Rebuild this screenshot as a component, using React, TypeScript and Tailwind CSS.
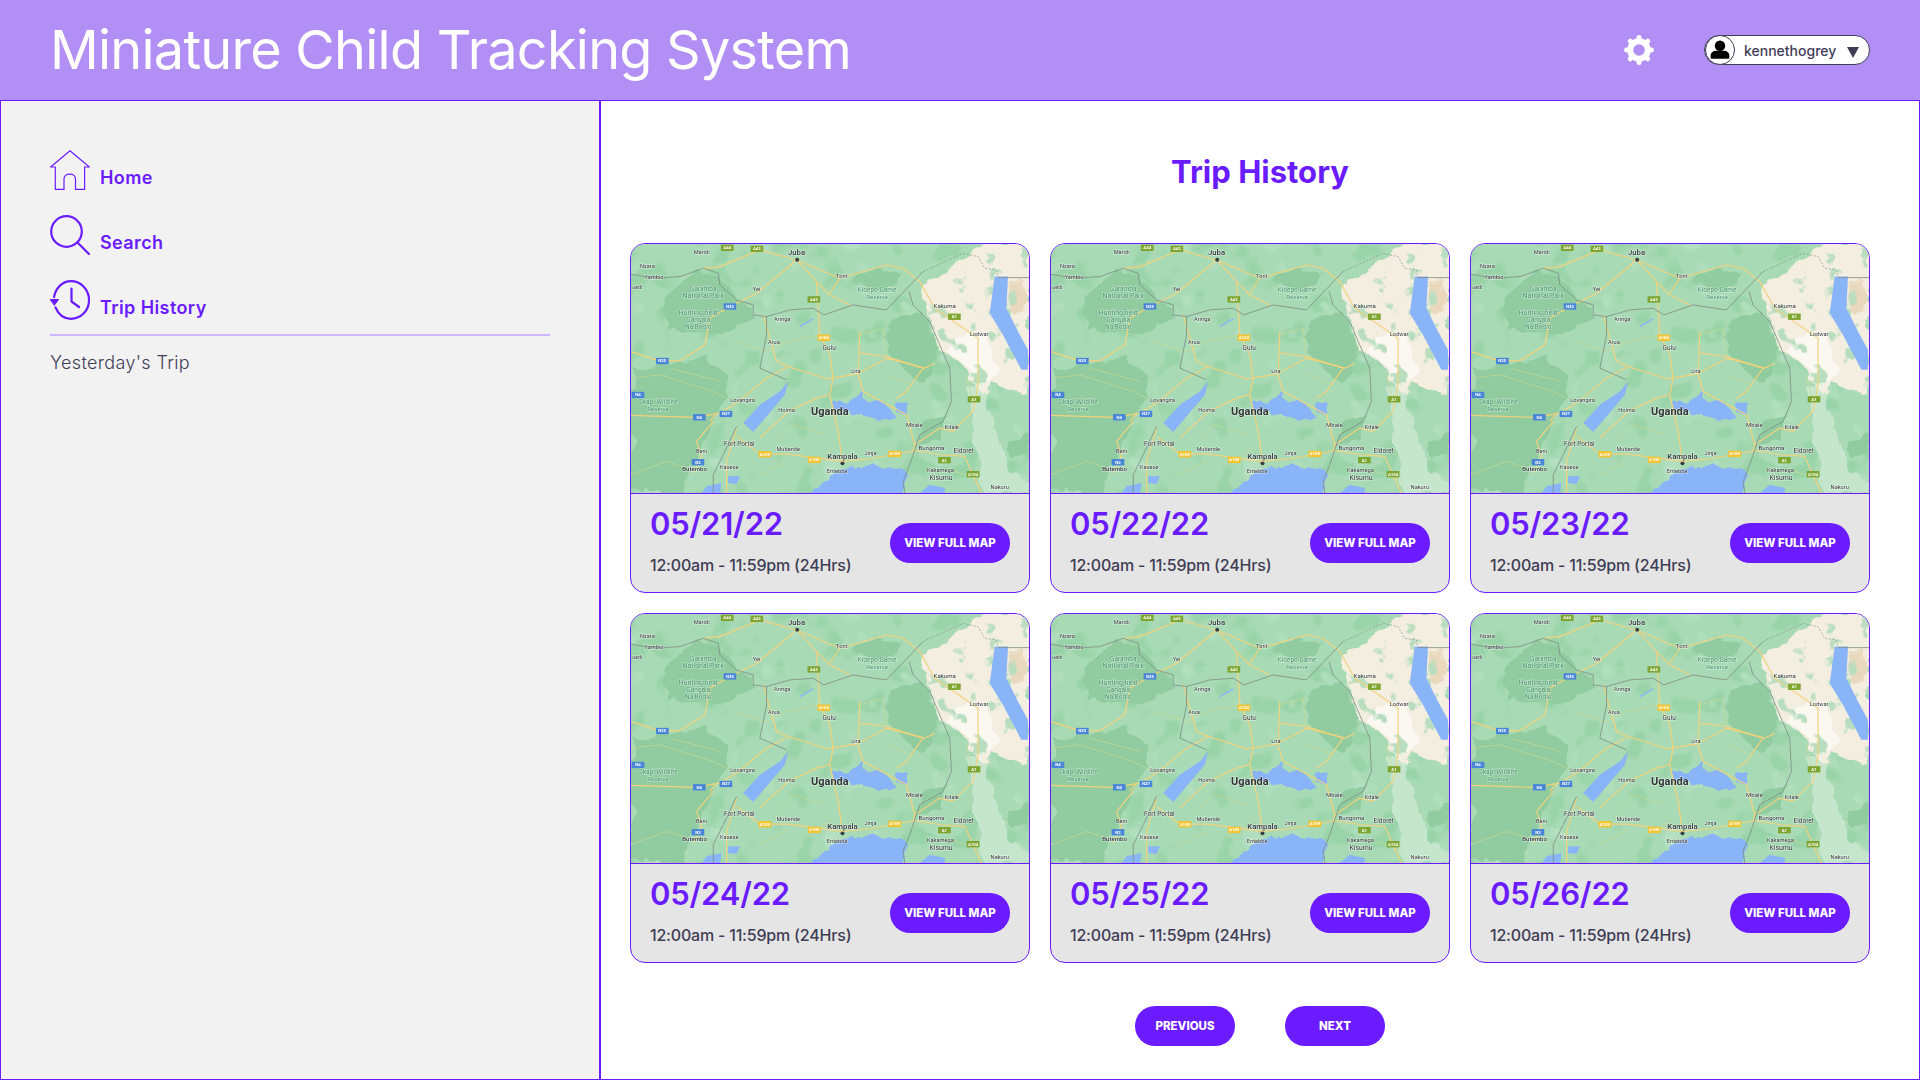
const trips = ["05/21/22", "05/22/22", "05/23/22", "05/24/22", "05/25/22", "05/26/22"];

const roads = [
  "M33 542 L130 545 L225 548 L300 535 L350 505 L440 430 L505 395 L620 432 L710 418 L800 370 L915 400 L945 385",
  "M250 100 L300 95 L420 45 L530 75 L660 130 L800 90 L850 100 L900 140 L945 220 L1075 310 L1075 450 L1060 530 L1000 590",
  "M530 75 L590 140 L600 300 L630 360 L640 430 L630 480 L655 590 L668 685",
  "M430 240 L470 380 L505 395 M720 290 L715 420 L730 470 L860 540 L885 630 L880 650",
  "M33 350 L120 378 L180 378 L255 330 L270 250 L330 215 L410 175 L530 75",
  "M350 605 L420 658 L505 658 L665 680 L750 672 L885 648 L965 660 L1035 665 L1060 720 L1085 775",
  "M270 560 L290 535 M350 580 L320 680 L320 775 M220 715 L245 665 L230 620 L280 560",
  "M505 530 L420 610 M505 530 L590 490 L630 480 M720 355 L800 365 L910 400 L860 470 L830 490",
  "M590 140 L630 180 L690 210 M630 175 L660 130 M885 630 L960 580 L1000 590",
];

const minorRoads = [
  "M33 430 L120 420 L280 470 L340 500 M150 400 L300 440 M340 320 L440 350 L500 320 L600 300",
  "M470 620 L520 570 L620 600 M560 700 L640 640 M720 300 L790 280 L800 370 M880 450 L800 420",
  "M33 720 L140 680 L200 700 M420 720 L500 680 M1040 420 L1060 500 M980 700 L1090 740",
];

const labels: [number, number, string, number, number?][] = [
  [530, 60, "Juba", 19, 500],
  [245, 58, "Maridi", 14],
  [82, 98, "Nzara", 14],
  [102, 132, "Yambio", 14],
  [52, 162, "uedi", 13],
  [666, 128, "Torit", 14],
  [410, 168, "Yei", 14],
  [487, 258, "Aringa", 14],
  [462, 326, "Arua", 14],
  [628, 346, "Gulu", 16],
  [708, 416, "Lira", 14],
  [975, 220, "Kakuma", 15],
  [1078, 302, "Lodwar", 14],
  [368, 502, "Lovangira", 14],
  [500, 532, "Hoima", 14],
  [630, 540, "Uganda", 27, 700],
  [884, 576, "Mbale", 15],
  [996, 584, "Kitale", 14],
  [358, 634, "Fort Portal", 16],
  [505, 650, "Mubende", 14],
  [668, 672, "Kampala", 19, 500],
  [752, 662, "Jinja", 14],
  [935, 646, "Bungoma", 15],
  [1032, 654, "Eldoret", 16],
  [245, 656, "Beni", 14],
  [224, 708, "Butembo", 15, 500],
  [328, 702, "Kasese", 14],
  [652, 716, "Entebbe", 14],
  [962, 713, "Kakamega", 14],
  [964, 736, "Kisumu", 17],
  [1140, 764, "Nakuru", 14],
];

const parkLabels: [number, number, string, number][] = [
  [250, 168, "Garamba", 16],
  [250, 190, "National Park", 17],
  [235, 241, "Hunting field", 17],
  [235, 261, "Gangala", 16],
  [235, 282, "Na Bodio", 16],
  [772, 172, "Kidepo Game", 16],
  [772, 192, "Reserve", 15],
  [114, 507, "Okapi Wildlife", 16],
  [114, 528, "Reserve", 15],
];

const shields: [number, number, string, string][] = [
  [322, 38, "A44", "#7ea52f"],
  [411, 41, "A43", "#7ea52f"],
  [582, 193, "A43", "#7ea52f"],
  [612, 308, "A104", "#f4c430"],
  [1004, 245, "A1", "#7ea52f"],
  [1063, 493, "A1", "#7ea52f"],
  [974, 676, "A1", "#7ea52f"],
  [1060, 718, "A104", "#7ea52f"],
  [435, 658, "A109", "#f4c430"],
  [583, 675, "A109", "#f4c430"],
  [825, 657, "A109", "#f4c430"],
  [330, 214, "N25", "#4a86d8"],
  [127, 378, "N25", "#4a86d8"],
  [238, 547, "N4", "#4a86d8"],
  [318, 537, "N27", "#4a86d8"],
  [234, 682, "N2", "#4a86d8"],
  [54, 480, "N4", "#4a86d8"],
];

const aridShape =
  "M920 130 L990 95 L1050 60 L1130 30 L1228 30 L1228 480 L1170 470 L1120 445 L1090 500 L1060 440 L1010 385 L965 345 L935 280 L915 200 Z";

function MapImage() {
  return (
    <svg viewBox="33 27 1195 748" preserveAspectRatio="none" className="block h-full w-full blur-[0.6px]">
      <defs>
        <filter id="organic" x="-5%" y="-5%" width="110%" height="110%" colorInterpolationFilters="sRGB">
          <feTurbulence type="fractalNoise" baseFrequency="0.014" numOctaves="3" seed="4" result="n" />
          <feDisplacementMap in="SourceGraphic" in2="n" scale="55" xChannelSelector="R" yChannelSelector="G" />
          <feGaussianBlur stdDeviation="1.5" />
        </filter>
        <filter id="rough" x="-5%" y="-5%" width="110%" height="110%" colorInterpolationFilters="sRGB">
          <feTurbulence type="fractalNoise" baseFrequency="0.035" numOctaves="2" seed="7" result="n" />
          <feDisplacementMap in="SourceGraphic" in2="n" scale="24" xChannelSelector="R" yChannelSelector="G" />
        </filter>
        <filter id="mottleGreen" x="0" y="0" width="100%" height="100%" colorInterpolationFilters="sRGB">
          <feTurbulence type="fractalNoise" baseFrequency="0.012" numOctaves="2" seed="11" />
          <feColorMatrix values="0 0 0 0 0.6 0 0 0 0 0.83 0 0 0 0 0.66 8 0 0 0 -4.6" />
        </filter>
        <filter id="mottleLight" x="0" y="0" width="100%" height="100%" colorInterpolationFilters="sRGB">
          <feTurbulence type="fractalNoise" baseFrequency="0.012" numOctaves="2" seed="23" />
          <feColorMatrix values="0 0 0 0 0.7 0 0 0 0 0.875 0 0 0 0 0.75 8 0 0 0 -5.2" />
        </filter>
        <filter id="mottleWhite" x="0" y="0" width="100%" height="100%" colorInterpolationFilters="sRGB">
          <feTurbulence type="fractalNoise" baseFrequency="0.02" numOctaves="3" seed="31" />
          <feColorMatrix values="0 0 0 0 0.72 0 0 0 0 0.87 0 0 0 0 0.75 10 0 0 0 -6" />
        </filter>
        <clipPath id="aridClip">
          <path d={aridShape} />
        </clipPath>
      </defs>
      <rect x="33" y="27" width="1195" height="748" fill="#a8dab5" />
      <rect x="33" y="27" width="1195" height="748" filter="url(#mottleGreen)" />
      <rect x="33" y="27" width="1195" height="748" filter="url(#mottleLight)" />
      {/* darker forest patches */}
      <g fill="#90cca0" filter="url(#organic)">
        <path d="M33 390 L150 400 L260 360 L330 420 L330 500 L270 560 L240 640 L180 775 L33 775 Z" />
        <path d="M140 170 L240 105 L295 125 L340 190 L390 215 L400 245 L300 300 L150 290 L120 230 Z" />
        <path d="M700 130 L770 100 L850 130 L800 170 L730 160 Z" />
        <path d="M820 250 L900 230 L960 340 L920 440 L850 400 L780 300 Z" />
        <path d="M900 560 L980 540 L960 610 L890 630 Z" />
        <path d="M1165 640 L1228 590 L1228 660 L1180 680 Z" />
      </g>
      {/* arid land */}
      <g filter="url(#organic)">
        <path d={aridShape} fill="#f4eee0" />
        <path d="M980 350 L1050 290 L1110 320 L1130 430 L1085 460 L1040 400 Z" fill="#fbf8f1" />
        <path d="M1165 145 L1215 145 L1228 185 L1200 240 L1170 235 Z" fill="#ead8bc" />
        <path d="M1040 450 L1100 470 L1140 610 L1180 720 L1228 740 L1228 775 L1100 775 L1060 620 Z" fill="#c5e6cd" />
      </g>
      <g clipPath="url(#aridClip)">
        <rect x="900" y="27" width="330" height="460" filter="url(#mottleWhite)" />
      </g>
      {/* water */}
      <g fill="#8ab4f8">
        <path d="M1125 125 L1165 125 L1160 220 L1195 290 L1225 345 L1225 405 L1205 405 L1150 300 L1110 235 Z" />
        <path d="M505 440 L495 480 L400 592 L370 565 L420 510 L480 470 Z" />
        <path d="M245 775 L260 755 L305 745 L300 775 Z" />
        <path d="M325 725 L360 725 L350 748 L325 745 Z" />
        <path d="M900 775 L930 750 L975 760 L975 775 Z" />
      </g>
      <g fill="#8ab4f8" filter="url(#rough)">
        <path d="M555 790 L640 722 L665 700 L760 690 L860 705 L850 790 Z" />
        <path d="M640 505 L690 500 L730 470 L725 495 L790 500 L830 545 L780 560 L720 540 L680 530 L640 525 Z" />
        <path d="M825 510 L865 505 L860 540 L835 535 Z" />
      </g>
      <path d="M540 275 L580 252" fill="none" stroke="#8ab4f8" strokeWidth="4" />
      {/* roads */}
      <g fill="none" stroke="#c9d98c" strokeWidth="2">
        {minorRoads.map((d) => (
          <path key={d} d={d} />
        ))}
      </g>
      <g fill="none" stroke="#f4d27a" strokeWidth="3.5" strokeLinejoin="round">
        {roads.map((d) => (
          <path key={d} d={d} />
        ))}
      </g>
      {/* borders */}
      <g fill="none" stroke="#7f8f87" strokeWidth="2.5" strokeLinejoin="round">
        <path d="M33 118 L75 125 L130 128 L180 125 L250 100 L295 115 L300 150 L350 195 L400 210 L400 240 L440 245 L510 225 L580 220 L612 240 L700 210 L800 225 L910 110" />
        <path d="M440 245 L440 300 L420 400 L500 435" />
        <path d="M350 575 L310 660 L280 720 L280 775" />
        <path d="M868 170 L880 210 L930 260 L990 400 L995 500 L970 560 L900 600 L870 690 L850 740 L855 775" />
        <path d="M1135 128 L1228 128" />
      </g>
      <path d="M910 110 L1030 55 L1075 65 L1095 100 L1130 105 L1135 128" fill="none" stroke="#7f8f87" strokeWidth="2" strokeDasharray="6 5" />
      {/* road shields */}
      {shields.map(([x, y, text, color]) => (
        <g key={`${x}-${y}`}>
          <rect x={x - 19} y={y - 9} width="38" height="19" fill={color} />
          <text x={x} y={y + 5} textAnchor="middle" fontSize="13" fontWeight="700" fill="#ffffff" fontFamily="Roboto, sans-serif">
            {text}
          </text>
        </g>
      ))}
      {/* place names */}
      <g fontFamily="Roboto, sans-serif" textAnchor="middle" fill="#333639">
        {labels.map(([x, y, text, size, weight]) => (
          <text key={text} x={x} y={y} fontSize={size * 1.22} fontWeight={weight ?? 400} stroke="#ffffff" strokeOpacity="0.6" strokeWidth="3" paintOrder="stroke">
            {text}
          </text>
        ))}
      </g>
      <g fontFamily="Roboto, sans-serif" textAnchor="middle" fill="#3f9165">
        {parkLabels.map(([x, y, text, size]) => (
          <text key={`${text}-${x}`} x={x} y={y} fontSize={size * 1.22} stroke="#ffffff" strokeOpacity="0.55" strokeWidth="3" paintOrder="stroke">
            {text}
          </text>
        ))}
      </g>
      <g fill="#3c4043">
        <circle cx="532" cy="74" r="6" />
        <circle cx="668" cy="686" r="6" />
      </g>
    </svg>
  );
}

function HomeIcon() {
  return (
    <svg viewBox="0 0 40 40" className="h-10 w-10 shrink-0" fill="none" stroke="#6a1bff" strokeWidth="1.2">
      <path d="M20 0.7 L0.6 17 H5.3 V39.4 H14 V29 C14 22.5 25.5 22.5 25.5 29 V39.4 H34.6 V17 H39.4 Z" />
    </svg>
  );
}

function SearchIcon() {
  return (
    <svg viewBox="0 0 40 40" className="h-10 w-10 shrink-0" fill="none" stroke="#6a1bff" strokeWidth="2.2" strokeLinecap="round">
      <ellipse cx="16.5" cy="16.5" rx="15.3" ry="15.3" />
      <path d="M27.5 27.5 L39 39" />
    </svg>
  );
}

function HistoryIcon() {
  return (
    <svg viewBox="0 0 40 40" className="h-10 w-10 shrink-0" fill="none" stroke="#6a1bff" strokeWidth="2.2" strokeLinecap="round" strokeLinejoin="round">
      <path d="M4 17 C6 7 13 1.2 21 1.2 C31 1.2 39 9.5 39 20 C39 30.5 31 38.8 21 38.8 C14 38.8 8.5 34.5 5.5 27.5" />
      <path d="M21.5 8.5 V21.5 L29 27" />
      <path d="M0.5 19.5 H8.5 L4.5 25 Z" fill="#6a1bff" strokeWidth="1" />
    </svg>
  );
}

function GearIcon() {
  return (
    <svg viewBox="0 0 30 30" className="h-[30px] w-[30px] shrink-0">
      <circle cx="15" cy="15" r="8.8" fill="none" stroke="#ffffff" strokeWidth="6" />
      <g stroke="#ffffff" strokeWidth="5" strokeLinecap="round">
        {[0, 45, 90, 135, 180, 225, 270, 315].map((angle) => (
          <line key={angle} x1="15" y1="5.5" x2="15" y2="2.6" transform={`rotate(${angle} 15 15)`} />
        ))}
      </g>
    </svg>
  );
}

function AvatarIcon() {
  return (
    <svg viewBox="0 0 30 30" className="h-[30px] w-[30px] shrink-0 rounded-full border border-[#3f3d56] bg-white">
      <circle cx="15" cy="10.5" r="5.6" fill="#000000" />
      <path d="M5 24 V21 C5 17.5 8 15.8 11 15.8 H19 C22 15.8 25 17.5 25 21 V24 C22 24.6 8 24.6 5 24 Z" fill="#000000" />
    </svg>
  );
}

function NavItem({ icon, label }: { icon: React.ReactNode; label: string }) {
  return (
    <a className="flex h-10 items-end gap-[10px]">
      {icon}
      <span className="text-[18px] leading-[24px] font-semibold tracking-[0.4px] text-[#6a1bff]">{label}</span>
    </a>
  );
}

function TripCard({ date }: { date: string }) {
  return (
    <div className="h-[350px] overflow-hidden rounded-[15px] border border-[#6a1bff] bg-[#e5e5e5]">
      <div className="h-[250px] overflow-hidden border-b border-[#6a1bff]">
        <MapImage />
      </div>
      <div className="flex h-[98px] justify-between pr-[19px] pl-[19px]">
        <div className="pt-[10px]">
          <p className="text-[31px] leading-[40px] font-semibold tracking-[-0.2px] text-[#6a1bff]">{date}</p>
          <p className="mt-[10px] text-[16px] leading-[22px] font-medium tracking-[-0.2px] text-[#3f3d56]">12:00am - 11:59pm (24Hrs)</p>
        </div>
        <button type="button" className="mt-[29px] h-10 w-[120px] rounded-full bg-[#6a1bff] pt-[1px] text-[11.5px] font-extrabold text-white">
          VIEW FULL MAP
        </button>
      </div>
    </div>
  );
}

export default function App() {
  return (
    <div className="flex h-screen w-full flex-col overflow-hidden bg-white font-['Inter',sans-serif]">
      <header className="flex h-[101px] shrink-0 items-center justify-between border-b border-[#6a1bff] bg-[#b18ff5] pr-[50px] pl-[50px]">
        <h1 className="text-[54px] leading-[68px] font-normal tracking-[-0.75px] text-white">Miniature Child Tracking System</h1>
        <div className="flex items-center gap-[50px]">
          <GearIcon />
          <div className="flex h-[30px] w-[166px] items-center rounded-full border border-[#3f3d56] bg-white">
            <AvatarIcon />
            <span className="ml-[9px] text-[14px] font-medium text-[#3f3d56]">kennethogrey</span>
            <span className="mt-[5px] ml-[11px] h-0 w-0 border-x-[6px] border-t-[11px] border-x-transparent border-t-[#3f3d56]" />
          </div>
        </div>
      </header>
      <div className="flex min-h-0 flex-1">
        <aside className="w-[600px] shrink-0 border-x border-b border-[#6a1bff] bg-[#f2f2f2] pt-[49px] pr-[49px] pl-[49px]">
          <nav className="flex flex-col gap-[25px]">
            <NavItem icon={<HomeIcon />} label="Home" />
            <NavItem icon={<SearchIcon />} label="Search" />
            <NavItem icon={<HistoryIcon />} label="Trip History" />
          </nav>
          <div className="mt-[14px] h-[2px] bg-[#cdb8fb]" />
          <p className="mt-[15px] text-[18px] leading-[24px] font-light tracking-[0.35px] text-[#3f3d56]">Yesterday&apos;s Trip</p>
        </aside>
        <main className="flex min-w-0 flex-1 flex-col items-center border-x border-b border-[#6a1bff]">
          <h2 className="mt-[51px] text-[31px] leading-[40px] font-bold text-[#6a1bff]">Trip History</h2>
          <div className="mt-[51px] grid w-full grid-cols-3 gap-x-[20px] gap-y-[20px] pr-[49px] pl-[29px]">
            {trips.map((date) => (
              <TripCard key={date} date={date} />
            ))}
          </div>
          <div className="mt-[43px] flex gap-[50px]">
            <button type="button" className="h-10 w-[100px] rounded-full bg-[#6a1bff] pt-[1px] text-[11.5px] font-extrabold text-white">
              PREVIOUS
            </button>
            <button type="button" className="h-10 w-[100px] rounded-full bg-[#6a1bff] pt-[1px] text-[11.5px] font-extrabold text-white">
              NEXT
            </button>
          </div>
        </main>
      </div>
    </div>
  );
}
